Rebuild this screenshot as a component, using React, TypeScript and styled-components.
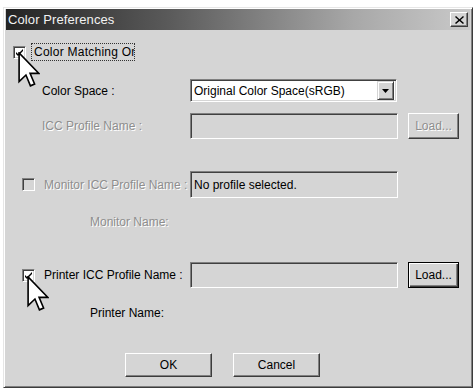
import React from "react";
import styled, { createGlobalStyle } from "styled-components";

const GlobalStyle = createGlobalStyle`
  html, body {
    margin: 0;
    padding: 0;
    background: #ffffff;
  }
  body {
    font-family: "Liberation Sans", Arial, sans-serif;
    font-size: 12px;
  }
`;

const face = "#d5d5d5";

const Window = styled.div`
  margin: 7px 0 0 3px;
  width: 470px;
  height: 381px;
  box-sizing: border-box;
  background: ${face};
  border: 1px solid;
  border-color: #e6e6e6 #3c3c3c #3c3c3c #e6e6e6;
  box-shadow: inset 1px 1px #ffffff, inset -1px -1px #808080;
  padding: 1px 2px 2px 2px;
  display: flex;
  flex-direction: column;
  position: relative;
`;

const TitleBar = styled.div`
  height: 21px;
  display: flex;
  align-items: center;
  justify-content: space-between;
  padding: 0 2px 0 2px;
  background: linear-gradient(90deg, #232323 0%, #5a5a5a 35%, #a8a8a8 75%, #c9c9c9 100%);
`;

const Title = styled.span`
  color: #f2f2f2;
  font-size: 13px;
  letter-spacing: 0.1px;
`;

const CloseButton = styled.div`
  width: 18px;
  height: 15px;
  box-sizing: border-box;
  background: ${face};
  border: 1px solid;
  border-color: #ffffff #3c3c3c #3c3c3c #ffffff;
  box-shadow: inset -1px -1px #808080;
  display: flex;
  align-items: center;
  justify-content: center;
`;

const Body = styled.div`
  display: flex;
  flex-direction: column;
`;

const Row = styled.div<{ $mt: number; $h: number; $pl?: number }>`
  margin-top: ${(p) => p.$mt}px;
  height: ${(p) => p.$h}px;
  padding-left: ${(p) => p.$pl ?? 0}px;
  display: flex;
  align-items: center;
`;

const FieldRow = styled.div<{ $mt: number; $h: number }>`
  margin-top: ${(p) => p.$mt}px;
  height: ${(p) => p.$h}px;
  display: grid;
  grid-template-columns: 184px 208px 61px;
  align-items: stretch;
`;

const LabelCell = styled.div<{ $pl: number }>`
  padding-left: ${(p) => p.$pl}px;
  display: flex;
  align-items: center;
  gap: 9px;
  white-space: nowrap;
`;

const Label = styled.span<{ $disabled?: boolean }>`
  color: ${(p) => (p.$disabled ? "#8e8e8e" : "#000")};
  text-shadow: ${(p) => (p.$disabled ? "1px 1px 0 #ffffff" : "none")};
`;

const Box = styled.div<{ $white?: boolean }>`
  box-sizing: border-box;
  background: ${(p) => (p.$white ? "#ffffff" : face)};
  border: 1px solid;
  border-color: #808080 #ffffff #ffffff #808080;
  box-shadow: inset 1px 1px #404040, inset -1px -1px ${face};
  display: flex;
  align-items: center;
  padding-left: 3px;
  color: #000;
`;

const DropBox = styled(Box)`
  height: 23px;
  width: 207px;
  align-self: center;
  justify-content: space-between;
  padding-right: 2px;
`;

const ArrowButton = styled.div`
  width: 17px;
  height: 19px;
  box-sizing: border-box;
  background: ${face};
  border: 1px solid;
  border-color: ${face} #3c3c3c #3c3c3c ${face};
  box-shadow: inset 1px 1px #ffffff, inset -1px -1px #808080;
  display: flex;
  align-items: center;
  justify-content: center;
`;

const PushButton = styled.div<{ $w: number; $disabled?: boolean; $default?: boolean }>`
  width: ${(p) => p.$w}px;
  box-sizing: border-box;
  background: ${face};
  border: 1px solid;
  border-color: ${(p) => (p.$default ? "#000 #000 #000 #000" : "#ffffff #3c3c3c #3c3c3c #ffffff")};
  box-shadow: ${(p) =>
    p.$default
      ? "inset 1px 1px #ffffff, inset -1px -1px #3c3c3c, inset -2px -2px #808080"
      : "inset -1px -1px #808080"};
  display: flex;
  align-items: center;
  justify-content: center;
  color: ${(p) => (p.$disabled ? "#8e8e8e" : "#000")};
  text-shadow: ${(p) => (p.$disabled ? "1px 1px 0 #ffffff" : "none")};
`;

const LoadButton = styled(PushButton)`
  margin-left: 10px;
  height: 26px;
  align-self: center;
`;

const CheckBox = styled.div<{ $disabled?: boolean }>`
  width: 13px;
  height: 13px;
  flex: none;
  box-sizing: border-box;
  background: ${(p) => (p.$disabled ? face : "#ffffff")};
  border: 1px solid;
  border-color: #808080 #ffffff #ffffff #808080;
  box-shadow: inset 1px 1px #404040, inset -1px -1px ${face};
  display: flex;
  align-items: center;
  justify-content: center;
`;

const FocusLabel = styled.div`
  width: 104px;
  height: 18px;
  box-sizing: border-box;
  border: 1px dotted #333;
  overflow: hidden;
  white-space: nowrap;
  padding-left: 2px;
  letter-spacing: 0.25px;
  display: flex;
  align-items: center;
  margin-left: 5px;
`;

const ButtonRow = styled.div`
  margin-top: 31px;
  padding-left: 119px;
  display: flex;
  gap: 21px;
  height: 24px;
`;

const Cursor = styled.svg`
  position: absolute;
  pointer-events: none;
`;

const Check = () => (
  <svg width="9" height="9" viewBox="0 0 9 9">
    <path d="M1 4 L3 6 L8 1 L8 3 L3 8 L1 6 Z" fill="#000" />
  </svg>
);

const Pointer = ({ left, top }: { left: number; top: number }) => (
  <Cursor width="22" height="36" viewBox="0 0 12 20" style={{ left, top }}>
    <path
      d="M0.5 0.5 L0.5 16.5 L4.3 12.8 L6.8 18.8 L9.1 17.8 L6.6 11.9 L11.5 11.9 Z"
      fill="#ffffff"
      stroke="#000"
      strokeWidth="0.9"
      strokeLinejoin="miter"
    />
  </Cursor>
);

export default function App() {
  return (
    <>
      <GlobalStyle />
      <Window>
        <TitleBar>
          <Title>Color Preferences</Title>
          <CloseButton>
            <svg width="9" height="8" viewBox="0 0 9 8">
              <path d="M1 0 L4.5 3.2 L8 0 L9 1 L5.6 4 L9 7 L8 8 L4.5 4.9 L1 8 L0 7 L3.4 4 L0 1 Z" fill="#000" />
            </svg>
          </CloseButton>
        </TitleBar>
        <Body>
          <Row $mt={13} $h={18} $pl={7}>
            <CheckBox>
              <Check />
            </CheckBox>
            <FocusLabel>Color Matching On</FocusLabel>
          </Row>

          <FieldRow $mt={18} $h={23}>
            <LabelCell $pl={36}>
              <Label>Color Space :</Label>
            </LabelCell>
            <DropBox $white>
              <span>Original Color Space(sRGB)</span>
              <ArrowButton>
                <svg width="7" height="4" viewBox="0 0 7 4">
                  <path d="M0 0 L7 0 L3.5 4 Z" fill="#000" />
                </svg>
              </ArrowButton>
            </DropBox>
          </FieldRow>

          <FieldRow $mt={11} $h={26}>
            <LabelCell $pl={36}>
              <Label $disabled>ICC Profile Name :</Label>
            </LabelCell>
            <Box />
            <LoadButton $w={51} $disabled>
              Load...
            </LoadButton>
          </FieldRow>

          <FieldRow $mt={32} $h={27}>
            <LabelCell $pl={16}>
              <CheckBox $disabled />
              <Label $disabled>Monitor ICC Profile Name :</Label>
            </LabelCell>
            <Box>No profile selected.</Box>
          </FieldRow>

          <Row $mt={15} $h={18} $pl={84}>
            <Label $disabled>Monitor Name:</Label>
          </Row>

          <FieldRow $mt={31} $h={26}>
            <LabelCell $pl={16}>
              <CheckBox>
                <Check />
              </CheckBox>
              <Label>Printer ICC Profile Name :</Label>
            </LabelCell>
            <Box />
            <LoadButton $w={51} $default>
              Load...
            </LoadButton>
          </FieldRow>

          <Row $mt={16} $h={18} $pl={84}>
            <Label>Printer Name:</Label>
          </Row>

          <ButtonRow>
            <PushButton $w={87}>OK</PushButton>
            <PushButton $w={87}>Cancel</PushButton>
          </ButtonRow>
        </Body>
        <Pointer left={14} top={44} />
        <Pointer left={23} top={268} />
      </Window>
    </>
  );
}
